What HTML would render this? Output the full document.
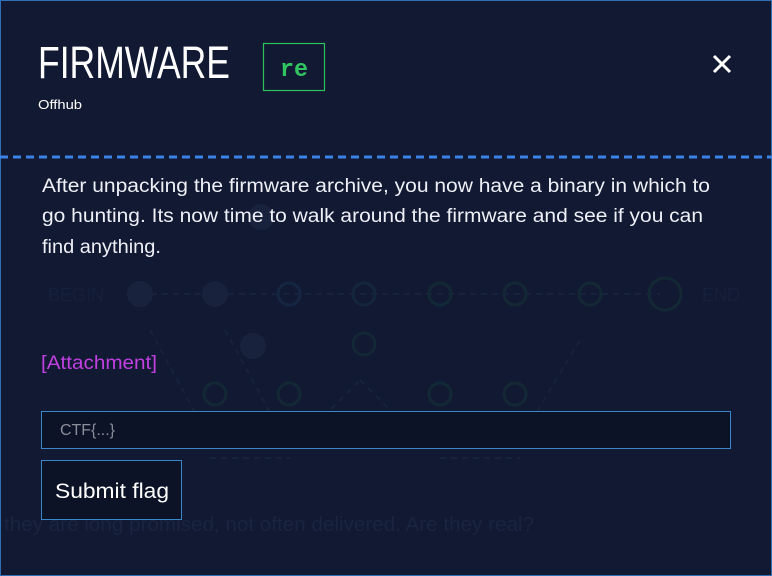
<!DOCTYPE html>
<html><head><meta charset="utf-8"><style>
html,body{margin:0;padding:0;width:772px;height:576px;overflow:hidden;background:#111933;font-family:"Liberation Sans",sans-serif}
svg{position:absolute;left:0;top:0}
</style></head><body>
<svg width="772" height="576" viewBox="0 0 772 576" xmlns="http://www.w3.org/2000/svg">
<rect x="0" y="0" width="772" height="576" fill="#111933"/>
<g opacity="0.4">
<text x="48" y="301" font-family="Liberation Sans" font-size="18" fill="#1f2a48">BEGIN</text>
<text x="702" y="301" font-family="Liberation Sans" font-size="18" fill="#1f2a48">END</text>
<g stroke="#1f3050" stroke-width="2" stroke-dasharray="6 5" fill="none">
<line x1="140" y1="294" x2="660" y2="294"/>
<line x1="150" y1="330" x2="210" y2="440"/>
<line x1="225" y1="330" x2="285" y2="440"/>
<line x1="300" y1="440" x2="360" y2="380"/>
<line x1="360" y1="380" x2="420" y2="440"/>
<line x1="520" y1="440" x2="580" y2="340"/>
<line x1="210" y1="458" x2="290" y2="458"/>
<line x1="440" y1="458" x2="520" y2="458"/>
</g>
<circle cx="140" cy="294" r="13" fill="#26304a"/>
<circle cx="215" cy="294" r="13" fill="#26304a"/>
<circle cx="253" cy="346" r="13" fill="#26304a"/>
<circle cx="261" cy="217" r="13" fill="#26304a"/>
<g fill="none" stroke-width="3">
<circle cx="289" cy="294" r="11" stroke="#1b3a5a"/>
<circle cx="364" cy="294" r="11" stroke="#183a45"/>
<circle cx="440" cy="294" r="11" stroke="#183f38"/>
<circle cx="515" cy="294" r="11" stroke="#183f38"/>
<circle cx="590" cy="294" r="11" stroke="#183f38"/>
<circle cx="665" cy="294" r="16" stroke="#183f38"/>
<circle cx="364" cy="344" r="11" stroke="#183f38"/>
<circle cx="215" cy="394" r="11" stroke="#183f38"/>
<circle cx="289" cy="394" r="11" stroke="#183f38"/>
<circle cx="440" cy="394" r="11" stroke="#183f38"/>
<circle cx="515" cy="394" r="11" stroke="#183f38"/>
</g>
</g>
<text x="4" y="531" font-family="Liberation Sans" font-size="20" fill="#1a2440" textLength="530" lengthAdjust="spacingAndGlyphs">they are long promised, not often delivered. Are they real?</text>
<rect x="0.5" y="0.5" width="771" height="575" fill="none" stroke="#2f6fb5" stroke-width="1"/>
<text x="38" y="78" font-family="Liberation Sans" font-size="45" fill="#ffffff" textLength="192" lengthAdjust="spacingAndGlyphs">FIRMWARE</text>
<rect x="263.5" y="43.5" width="61" height="47" fill="none" stroke="#2ec05a" stroke-width="1.2"/>
<text x="280" y="76" font-family="Liberation Mono" font-size="24" font-weight="bold" fill="#32c460" textLength="28" lengthAdjust="spacingAndGlyphs">re</text>
<text x="38" y="109" font-family="Liberation Sans" font-size="13" fill="#ffffff" textLength="44" lengthAdjust="spacingAndGlyphs">Offhub</text>
<path d="M714 56 L730 72 M730 56 L714 72" stroke="#ffffff" stroke-width="3"/>
<line x1="0" y1="157" x2="772" y2="157" stroke="#3b82e6" stroke-width="3" stroke-dasharray="8 5"/>
<g font-family="Liberation Sans" font-size="19" fill="#eef0f6">
<text x="42" y="192" textLength="668" lengthAdjust="spacingAndGlyphs">After unpacking the firmware archive, you now have a binary in which to</text>
<text x="42" y="222" textLength="661" lengthAdjust="spacingAndGlyphs">go hunting. Its now time to walk around the firmware and see if you can</text>
<text x="42" y="253" textLength="119" lengthAdjust="spacingAndGlyphs">find anything.</text>
</g>
<text x="41" y="369" font-family="Liberation Sans" font-size="19" fill="#c040e0" textLength="116" lengthAdjust="spacingAndGlyphs">[Attachment]</text>
<rect x="41.5" y="411.5" width="689" height="37" fill="#0d1326" stroke="#3a86c8" stroke-width="1"/>
<text x="60" y="435" font-family="Liberation Sans" font-size="16" fill="#8a8e9a" textLength="55" lengthAdjust="spacingAndGlyphs">CTF{...}</text>
<rect x="41.5" y="460.5" width="140" height="59" fill="#0d1326" stroke="#3a86c8" stroke-width="1"/>
<text x="55" y="498" font-family="Liberation Sans" font-size="21" fill="#ffffff" textLength="114" lengthAdjust="spacingAndGlyphs">Submit flag</text>
</svg>
</body></html>
